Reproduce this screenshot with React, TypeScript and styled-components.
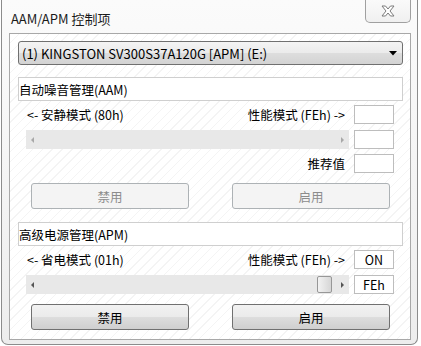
import styled, { createGlobalStyle } from "styled-components";

const GlobalStyle = createGlobalStyle`
  body {
    margin: 0;
    background: #ffffff;
    font-family: "Noto Sans CJK SC", "Noto Sans", sans-serif;
    font-size: 12.5px;
    color: #000;
  }
  * {
    box-sizing: border-box;
  }
`;

const Frame = styled.div`
  width: 417px;
  height: 345px;
  margin-left: 1px;
  border: 1px solid #8c8c8c;
  border-top: none;
  border-radius: 0 0 7px 7px;
  background: linear-gradient(180deg, #fbfbfb 0%, #f3f3f3 60%, #ededed 100%);
  display: flex;
  flex-direction: column;
  overflow: hidden;
`;

const TitleBar = styled.div`
  height: 33px;
  display: flex;
  justify-content: space-between;
  align-items: flex-start;
  padding-left: 9px;
`;

const Title = styled.div`
  font-size: 13px;
  line-height: 13px;
  margin-top: 12px;
  color: #1a1a1a;
`;

const CloseButton = styled.div`
  width: 46px;
  height: 23px;
  margin-right: 6px;
  border: 1px solid #a0a0a0;
  border-top: none;
  border-radius: 0 0 5px 5px;
  background: linear-gradient(180deg, #fafafa 0%, #f0f0f0 100%);
  display: flex;
  align-items: center;
  justify-content: center;
`;

const Client = styled.div`
  margin: 0 6px 0 7px;
  height: 307px;
  border: 1px solid #a8a8a8;
  background-color: #ffffff;
  background-image: repeating-linear-gradient(
    135deg,
    #ffffff 0px,
    #ffffff 6px,
    #f4f4f4 6px,
    #f4f4f4 7px
  );
  padding: 7px 7px 0 8px;
  display: flex;
  flex-direction: column;
`;

const Combo = styled.div`
  height: 24px;
  border: 1px solid #707070;
  border-radius: 3px;
  background: linear-gradient(180deg, #f4f4f4 0%, #ebebeb 48%, #dddddd 52%, #d3d3d3 100%);
  display: flex;
  align-items: center;
  justify-content: space-between;
  padding: 0 5px 0 3px;
  font-size: 13px;
`;

const GroupHeader = styled.div<{ $top: number }>`
  margin-top: ${(p) => p.$top}px;
  height: 24px;
  border: 1px solid #cfcfcf;
  background: #ffffff;
  display: flex;
  align-items: center;
  padding-left: 0;
`;

const Rows = styled.div`
  margin-top: 4px;
  display: flex;
  flex-direction: column;
  gap: 5px;
`;

const Row = styled.div`
  display: flex;
  align-items: center;
  gap: 5px;
  padding-left: 8px;
`;

const RowBody = styled.div<{ $align?: string }>`
  width: 323px;
  height: 19px;
  display: flex;
  align-items: center;
  justify-content: ${(p) => p.$align || "space-between"};
  padding: 0 4px 0 1px;
`;

const ValueBox = styled.div`
  width: 40px;
  height: 19px;
  border: 1px solid #bdbdbd;
  background: #ffffff;
  display: flex;
  align-items: center;
  justify-content: center;
`;

const Track = styled.div`
  width: 323px;
  height: 19px;
  margin-top: 1px;
  background: #e8e8e8;
  display: flex;
  align-items: center;
  justify-content: space-between;
  padding: 0 5px;
  position: relative;
`;

const Arrow = styled.div<{ $dir: "left" | "right"; $active?: boolean }>`
  width: 0;
  height: 0;
  border-top: 3px solid transparent;
  border-bottom: 3px solid transparent;
  ${(p) =>
    p.$dir === "left"
      ? `border-right: 3px solid ${p.$active ? "#555" : "#a8a8a8"};`
      : `border-left: 3px solid ${p.$active ? "#555" : "#a8a8a8"};`}
`;

const Thumb = styled.div<{ $left: number }>`
  position: absolute;
  top: 1px;
  left: ${(p) => p.$left}px;
  width: 15px;
  height: 17px;
  border: 1px solid #979797;
  border-radius: 2px;
  background: linear-gradient(90deg, #f2f2f2 0%, #e4e4e4 50%, #d6d6d6 100%);
`;

const ButtonRow = styled.div<{ $top: number }>`
  margin-top: ${(p) => p.$top}px;
  display: flex;
  justify-content: space-between;
  padding: 0 13px;
`;

const Button = styled.div<{ $disabled?: boolean }>`
  width: 158px;
  height: 26px;
  border-radius: 3px;
  display: flex;
  align-items: center;
  justify-content: center;
  ${(p) =>
    p.$disabled
      ? `
    border: 1px solid #adb2b5;
    background: #f4f4f4;
    color: #8c8c8c;
  `
      : `
    border: 1px solid #707070;
    background: linear-gradient(180deg, #f2f2f2 0%, #ebebeb 48%, #dddddd 52%, #cfcfcf 100%);
    color: #000;
  `}
`;

function CloseIcon() {
  return (
    <svg width="14" height="12" viewBox="0 0 14 12">
      <path
        d="M1 1 H4.5 L7 4 L9.5 1 H13 L9 6 L13 11 H9.5 L7 8 L4.5 11 H1 L5 6 Z"
        fill="#ffffff"
        stroke="#7a7a7a"
        strokeWidth="1"
        strokeLinejoin="round"
      />
    </svg>
  );
}

function ComboArrow() {
  return (
    <svg width="8" height="5" viewBox="0 0 8 5">
      <path d="M0 0 H8 L4 4.5 Z" fill="#000" />
    </svg>
  );
}

export default function App() {
  return (
    <>
      <GlobalStyle />
      <Frame>
        <TitleBar>
          <Title>AAM/APM 控制项</Title>
          <CloseButton>
            <CloseIcon />
          </CloseButton>
        </TitleBar>
        <Client>
          <Combo>
            <span>(1) KINGSTON SV300S37A120G [APM] (E:)</span>
            <ComboArrow />
          </Combo>

          <GroupHeader $top={12}>自动噪音管理(AAM)</GroupHeader>
          <Rows>
            <Row>
              <RowBody>
                <span>&lt;- 安静模式 (80h)</span>
                <span>性能模式 (FEh) -&gt;</span>
              </RowBody>
              <ValueBox />
            </Row>
            <Row>
              <Track>
                <Arrow $dir="left" />
                <Arrow $dir="right" />
              </Track>
              <ValueBox />
            </Row>
            <Row>
              <RowBody $align="flex-end">
                <span>推荐值</span>
              </RowBody>
              <ValueBox />
            </Row>
          </Rows>
          <ButtonRow $top={10}>
            <Button $disabled>禁用</Button>
            <Button $disabled>启用</Button>
          </ButtonRow>

          <GroupHeader $top={13}>高级电源管理(APM)</GroupHeader>
          <Rows>
            <Row>
              <RowBody>
                <span>&lt;- 省电模式 (01h)</span>
                <span>性能模式 (FEh) -&gt;</span>
              </RowBody>
              <ValueBox>ON</ValueBox>
            </Row>
            <Row>
              <Track>
                <Arrow $dir="left" $active />
                <Thumb $left={291} />
                <Arrow $dir="right" $active />
              </Track>
              <ValueBox>FEh</ValueBox>
            </Row>
          </Rows>
          <ButtonRow $top={10}>
            <Button>禁用</Button>
            <Button>启用</Button>
          </ButtonRow>
        </Client>
      </Frame>
    </>
  );
}
